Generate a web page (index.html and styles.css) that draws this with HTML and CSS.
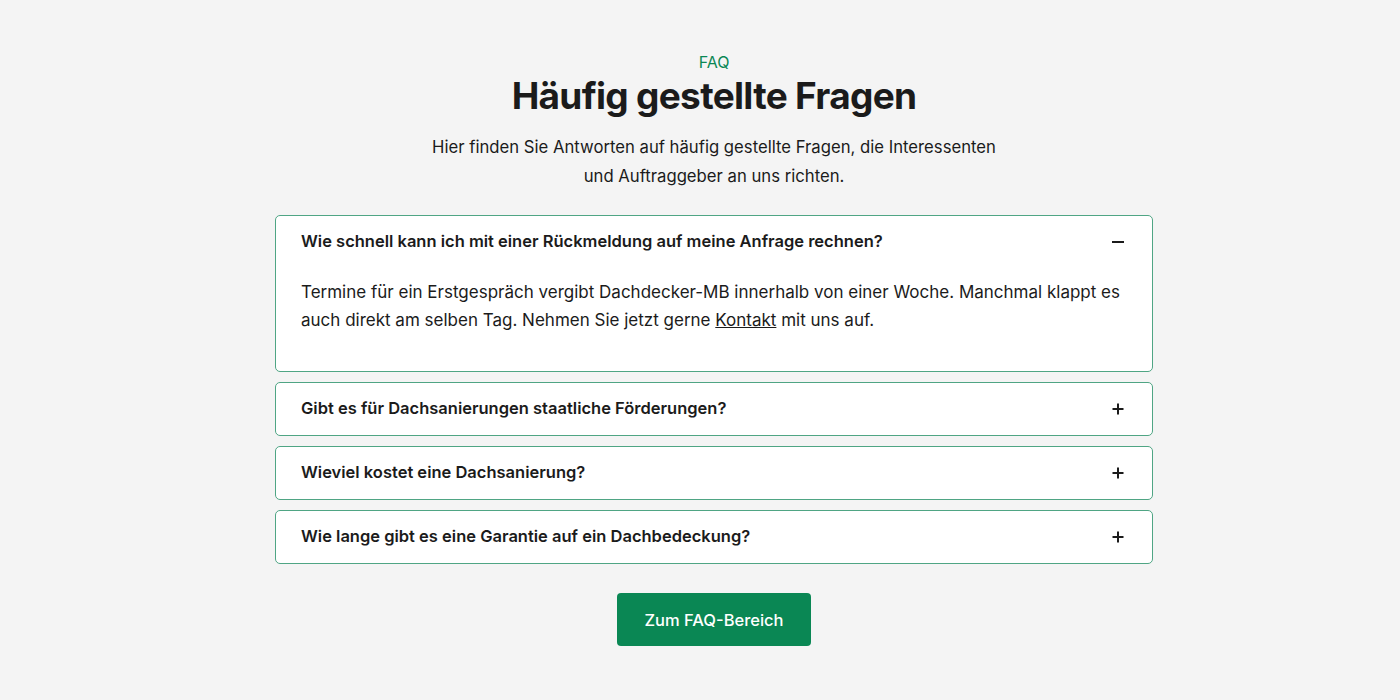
FILE: index.html
```html
<!DOCTYPE html>
<html lang="de">
<head>
  <meta charset="UTF-8">
  <meta name="viewport" content="width=device-width, initial-scale=1.0">
  <title>FAQ</title>
  <link rel="stylesheet" href="styles.css">
</head>
<body>
  <section class="faq">
    <p class="eyebrow">FAQ</p>
    <h1>Häufig gestellte Fragen</h1>
    <p class="intro">Hier finden Sie Antworten auf häufig gestellte Fragen, die Interessenten<br>und Auftraggeber an uns richten.</p>

    <div class="list">
      <div class="item open">
        <div class="question">
          <span>Wie schnell kann ich mit einer Rückmeldung auf meine Anfrage rechnen?</span>
          <svg class="icon" viewBox="0 0 12 12"><path d="M0 6h12" /></svg>
        </div>
        <p class="answer">Termine für ein Erstgespräch vergibt Dachdecker-MB innerhalb von einer Woche. Manchmal klappt es auch direkt am selben Tag. Nehmen Sie jetzt gerne <a href="#">Kontakt</a> mit uns auf.</p>
      </div>
      <div class="item">
        <div class="question">
          <span>Gibt es für Dachsanierungen staatliche Förderungen?</span>
          <svg class="icon" viewBox="0 0 12 12"><path d="M0.5 6h11M6 0.5v11" /></svg>
        </div>
      </div>
      <div class="item">
        <div class="question">
          <span>Wieviel kostet eine Dachsanierung?</span>
          <svg class="icon" viewBox="0 0 12 12"><path d="M0.5 6h11M6 0.5v11" /></svg>
        </div>
      </div>
      <div class="item">
        <div class="question">
          <span>Wie lange gibt es eine Garantie auf ein Dachbedeckung?</span>
          <svg class="icon" viewBox="0 0 12 12"><path d="M0.5 6h11M6 0.5v11" /></svg>
        </div>
      </div>
    </div>

    <a class="button" href="#">Zum FAQ-Bereich</a>
  </section>
</body>
</html>
```

FILE: styles.css
```css
body {
  margin: 0;
  padding-left: 28px;
  background-color: #f4f4f4;
  font-family: Inter, "Open Sans", sans-serif;
  color: #1b1b1b;
}
.faq {
  width: 878px;
  margin: 0 auto;
  padding-top: 51px;
  display: flex;
  flex-direction: column;
  align-items: center;
}
.eyebrow {
  margin: 0;
  color: #0a8754;
  font-size: 16px;
  line-height: 22px;
}
h1 {
  margin: 0;
  font-size: 37px;
  line-height: 46px;
  font-weight: 700;
  letter-spacing: -0.7px;
  color: #1b1b1b;
}
.intro {
  margin: 14px 0 0;
  text-align: center;
  font-size: 16.7px;
  line-height: 29px;
}
.list {
  width: 100%;
  margin-top: 24px;
  display: flex;
  flex-direction: column;
  gap: 10px;
}
.item {
  background-color: #ffffff;
  border: 1px solid #4fa584;
  border-radius: 5px;
  padding: 15px 28px 16px 25px;
}
.question {
  display: flex;
  justify-content: space-between;
  align-items: center;
  font-size: 16.5px;
  line-height: 21px;
  font-weight: 600;
}
.icon {
  width: 12px;
  height: 12px;
  stroke: #1b1b1b;
  stroke-width: 2;
  fill: none;
}
.item.open {
  padding-bottom: 37px;
}
.answer {
  margin: 26px 0 0;
  font-size: 17px;
  line-height: 28px;
}
.answer a {
  color: inherit;
}
.button {
  margin-top: 29px;
  width: 194px;
  height: 53px;
  display: flex;
  align-items: center;
  justify-content: center;
  background-color: #0a8754;
  color: #ffffff;
  border-radius: 4px;
  font-size: 16.5px;
  font-weight: 500;
  text-decoration: none;
}
```
